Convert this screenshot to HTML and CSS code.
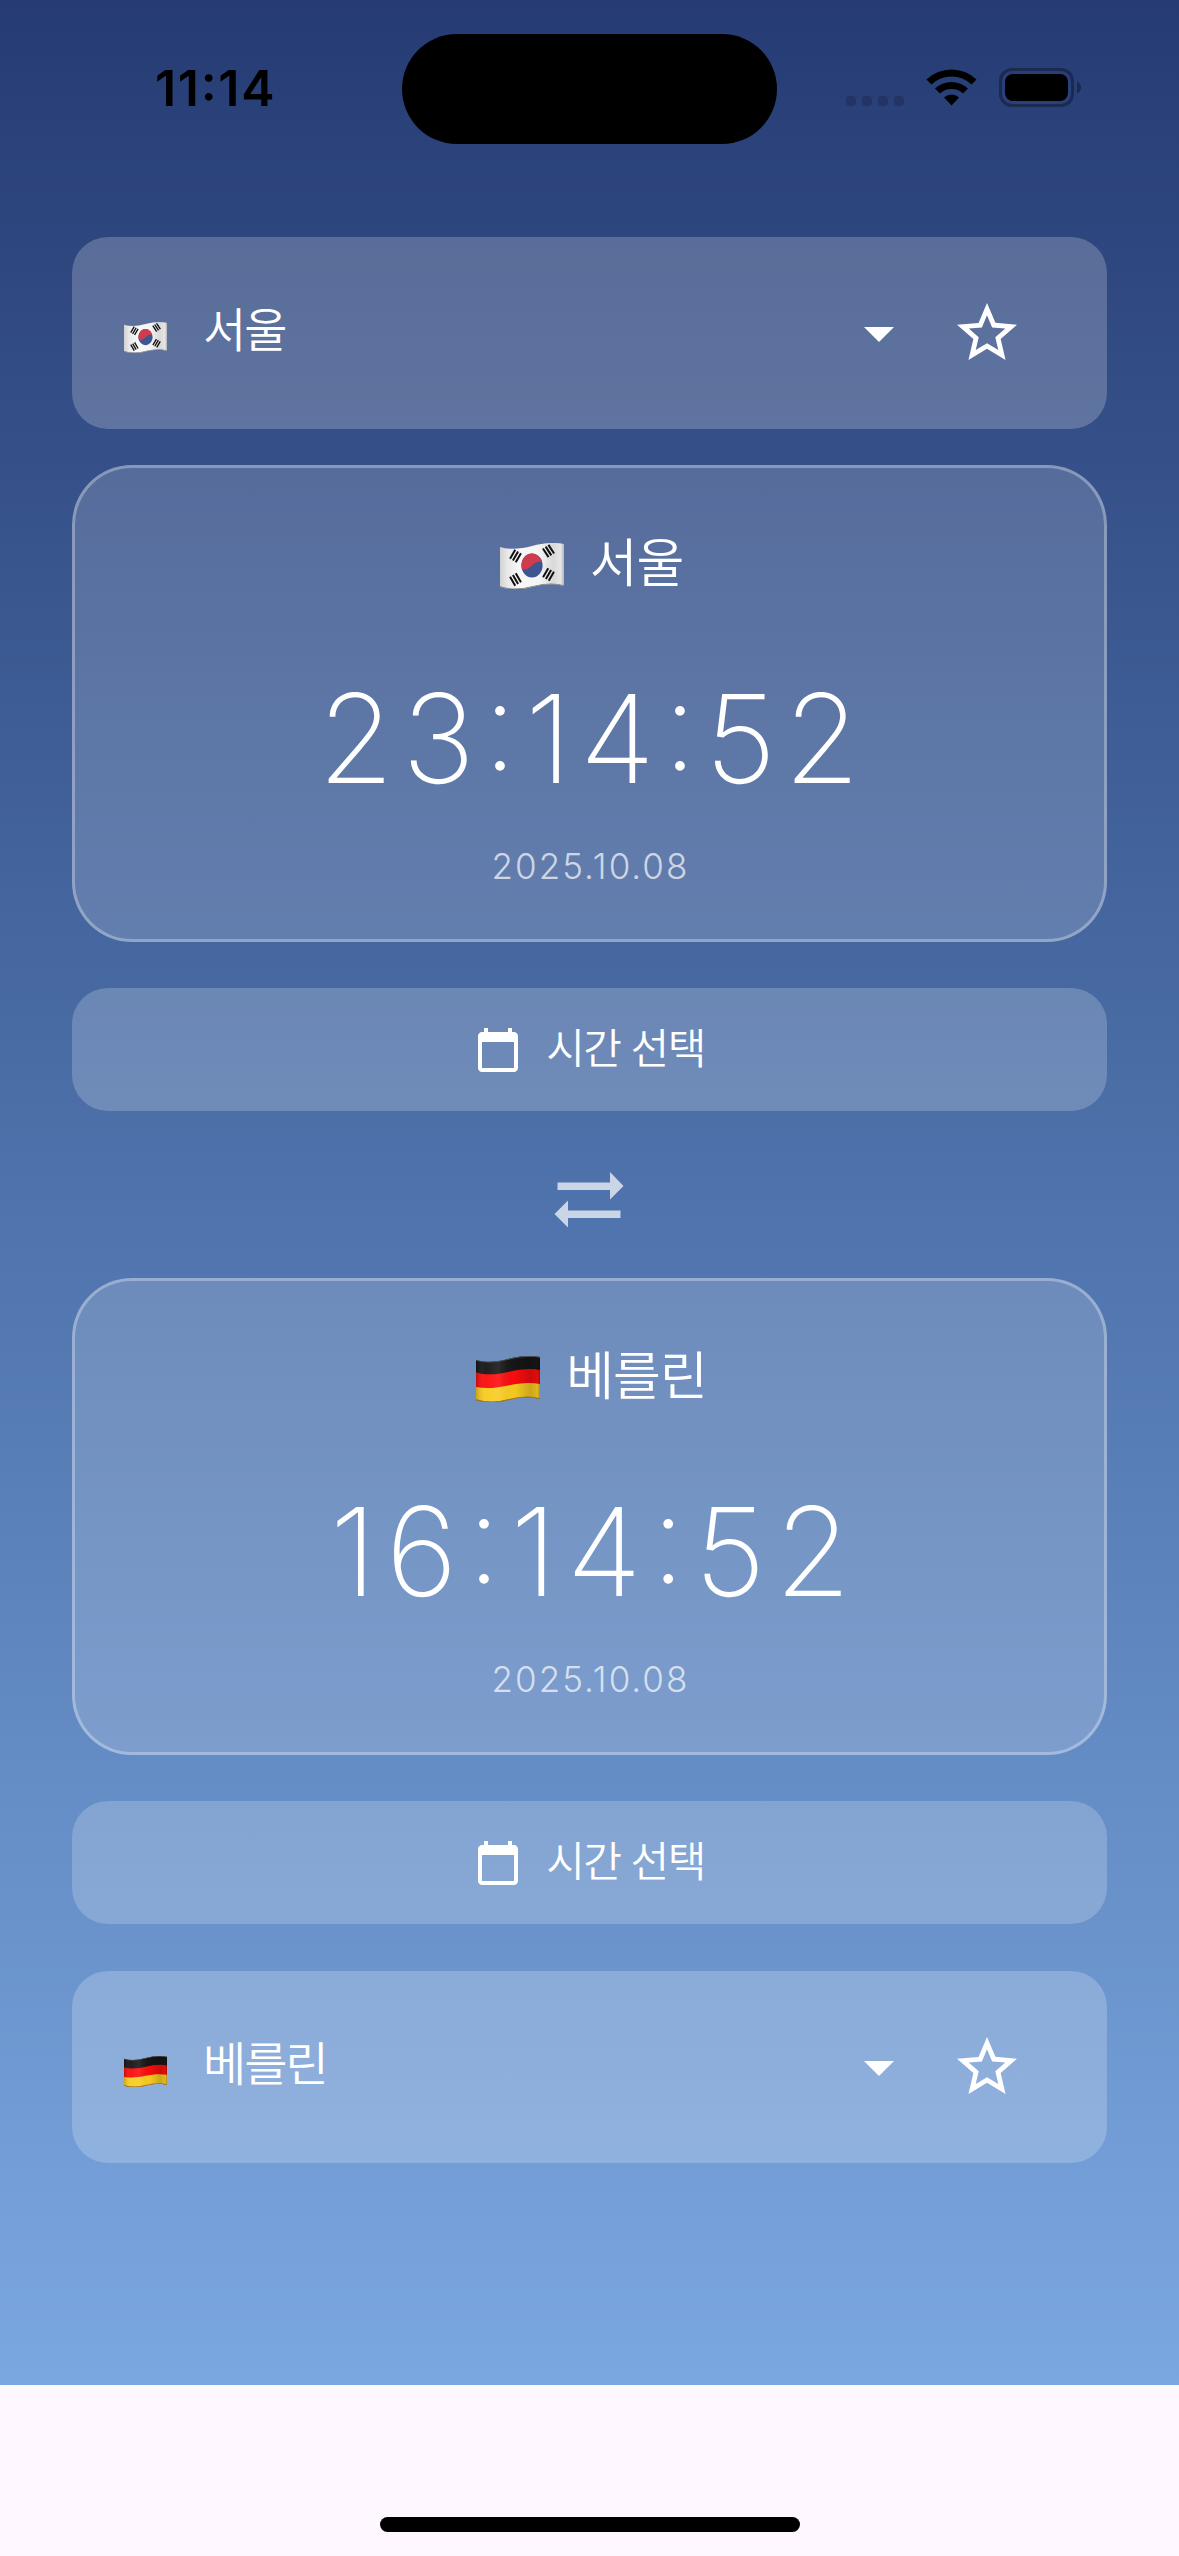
FILE: index.html
```html
<!DOCTYPE html>
<html lang="ko">
<head>
<meta charset="utf-8">
<title>세계 시간</title>
<link rel="stylesheet" href="styles.css">
</head>
<body>
<svg width="0" height="0" class="defs" aria-hidden="true">
  <defs>
    <linearGradient id="paper" x1="0" x2="1" y1="0" y2="0">
      <stop offset="0" stop-color="#d2d2d2"/><stop offset=".12" stop-color="#e9e9e9"/><stop offset=".3" stop-color="#f8f8f8"/><stop offset=".62" stop-color="#f4f4f5"/><stop offset=".83" stop-color="#d9d9da"/><stop offset=".95" stop-color="#e6e6e6"/><stop offset="1" stop-color="#b5b5b5"/>
    </linearGradient>
    <linearGradient id="fold" x1="0" x2="1" y1="0" y2="0">
      <stop offset="0" stop-color="#000" stop-opacity=".2"/><stop offset=".15" stop-color="#fff" stop-opacity=".04"/><stop offset=".35" stop-color="#fff" stop-opacity=".1"/><stop offset=".6" stop-color="#000" stop-opacity=".02"/><stop offset=".85" stop-color="#000" stop-opacity=".18"/><stop offset=".96" stop-color="#000" stop-opacity=".1"/><stop offset="1" stop-color="#000" stop-opacity=".3"/>
    </linearGradient>
    <clipPath id="wave"><path d="M0 4C10 7 21 6 32 3S54 -1 64 1V43C54 40 43 41 32 44S10 47 0 44Z"/></clipPath>
    <g id="bars" stroke="#111" stroke-width="2"><path d="M-3.300 -5.200V5.200M0 -5.200V5.200M3.300 -5.200V5.200"/></g>
    <symbol id="flag-kr" viewBox="0 0 64 46">
      <g clip-path="url(#wave)">
        <rect width="64" height="46" fill="url(#paper)"/>
        <g transform="translate(32 22.500)">
          <ellipse rx="10.600" ry="12" fill="#3d5591"/>
          <path d="M-10.300 3A10.600 12 0 1 1 10.300 -3C8 -4.500 3.500 -4 0 0S-8 5 -10.300 3Z" fill="#cf3c4e"/>
        </g>
        <use href="#bars" transform="translate(15.500 13) rotate(30)"/>
        <use href="#bars" transform="translate(48.500 8) rotate(-33)"/>
        <use href="#bars" transform="translate(15.500 36.500) rotate(-30)"/>
        <use href="#bars" transform="translate(48.500 31.500) rotate(30)"/>
        <path d="M0 44C10 47 21 47 32 44S54 40 64 43" fill="none" stroke="#777" stroke-width="1.600"/>
      </g>
    </symbol>
    <symbol id="flag-de" viewBox="0 0 64 46">
      <g clip-path="url(#wave)">
        <rect width="64" height="46" fill="#161616"/>
        <path d="M0 16.500C10 19.500 21 18.500 32 16S54 12 64 14V46H0Z" fill="#fb0d0d"/>
        <path d="M0 31C10 33 21 32 32 29.500S54 26 64 28V46H0Z" fill="#f8cc20"/>
        <rect width="64" height="46" fill="url(#fold)"/>
        <path d="M0 4C10 7 21 6 32 3S54 -1 64 1" fill="none" stroke="#555" stroke-width="1.600"/>
        <path d="M0 44C10 47 21 47 32 44S54 40 64 43" fill="none" stroke="#8b6d20" stroke-width="1.600"/>
      </g>
    </symbol>
    <symbol id="star" viewBox="0 0 24 24"><path fill="#fff" d="M22 9.240l-7.190-.620L12 2 9.190 8.630 2 9.240l5.460 4.730L5.820 21 12 17.270 18.180 21l-1.630-7.030L22 9.240zM12 15.400l-3.760 2.270 1-4.280-3.320-2.880 4.380-.380L12 6.100l1.710 4.040 4.380.380-3.320 2.880 1 4.280L12 15.400z"/></symbol>
    <symbol id="calendar" viewBox="0 0 24 24"><path fill="#fff" d="M20 3h-1V1h-2v2H7V1H5v2H4c-1.100 0-2 .900-2 2v16c0 1.100.900 2 2 2h16c1.100 0 2-.900 2-2V5c0-1.100-.900-2-2-2zm0 18H4V8h16v13z"/></symbol>
  </defs>
</svg>

<div class="screen">
  <header class="status">
    <div class="status-time">11:14</div>
    <div class="island"></div>
    <div class="status-icons">
      <svg class="dots" viewBox="0 0 58 10"><rect width="10" height="10" rx="3.500"/><rect x="16" width="10" height="10" rx="3.500"/><rect x="32" width="10" height="10" rx="3.500"/><rect x="48" width="10" height="10" rx="3.500"/></svg>
      <svg class="wifi" viewBox="0 0 51 38"><path d="M0.500 11.500A36 36 0 0 1 50.500 11.500L45.500 16.500A29 29 0 0 0 5.500 16.500Z"/><path d="M9 20.500A24 24 0 0 1 42 20.500L37 25.500A17 17 0 0 0 14 25.500Z"/><path d="M18 29.500A11 11 0 0 1 33 29.500L25.500 37.500Z"/></svg>
      <svg class="battery" viewBox="0 0 82 39"><rect x="1.500" y="1.500" width="72" height="36" rx="11.500" fill="none" stroke="#1c2950" stroke-width="3"/><rect x="6" y="6" width="63" height="27" rx="8"/><path d="M78 13.500Q82 15.500 82 19.500T78 25.500Z" fill="#1c2950"/></svg>
    </div>
  </header>

  <main class="content">
    <section class="picker">
      <svg class="flag-small"><use href="#flag-kr"/></svg>
      <span class="picker-name">서울</span>
      <svg class="caret" viewBox="0 0 30 15"><path d="M0 0H30L15 15Z"/></svg>
      <svg class="star"><use href="#star"/></svg>
    </section>

    <section class="clock">
      <div class="city"><svg class="flag-large"><use href="#flag-kr"/></svg><span>서울</span></div>
      <div class="time">23:14:52</div>
      <div class="date">2025.10.08</div>
    </section>

    <button class="select"><svg class="calendar"><use href="#calendar"/></svg><span>시간 선택</span></button>

    <svg class="swap" viewBox="0 0 70 56"><path d="M3.500 10.500H56V0L69.500 14L56 27.500V18H3.500ZM66.500 38.500H14V28.500L0.500 42L14 55.500V46H66.500Z"/></svg>

    <section class="clock">
      <div class="city"><svg class="flag-large"><use href="#flag-de"/></svg><span>베를린</span></div>
      <div class="time time-wide">16:14:52</div>
      <div class="date">2025.10.08</div>
    </section>

    <button class="select"><svg class="calendar"><use href="#calendar"/></svg><span>시간 선택</span></button>

    <section class="picker">
      <svg class="flag-small"><use href="#flag-de"/></svg>
      <span class="picker-name">베를린</span>
      <svg class="caret" viewBox="0 0 30 15"><path d="M0 0H30L15 15Z"/></svg>
      <svg class="star"><use href="#star"/></svg>
    </section>
  </main>
</div>
<footer class="bottom"><div class="home"></div></footer>
</body>
</html>
```

FILE: styles.css
```css
* { box-sizing: border-box; }
html, body { margin: 0; }
body {
  width: 1179px;
  height: 2556px;
  overflow: hidden;
  background: #fef7ff;
  font-family: Inter, "Noto Sans CJK KR", sans-serif;
  color: #fff;
}
svg { display: block; flex: none; }
.defs { position: absolute; }
.screen {
  height: 2385px;
  background: linear-gradient(180deg, #263b73 0%, #4a6da6 45%, #7ba7e0 100%);
}
.status {
  height: 237px;
  display: flex;
  align-items: flex-start;
  color: #000;
}
.status-time {
  width: 402px;
  padding: 58px 0 0 155px;
  font-size: 50px;
  line-height: 60px;
  font-weight: 600;
  letter-spacing: 1.700px;
  font-feature-settings: "case";
}
.island { width: 375px; height: 110px; margin-top: 34px; border-radius: 55px; background: #000; }
.status-icons { display: flex; align-items: flex-start; padding: 68px 0 0 69px; }
.dots { width: 58px; height: 10px; margin-top: 28px; fill: #233565; }
.wifi { width: 51px; height: 38px; margin: 0 22px; }
.battery { width: 82px; height: 39px; }
.content { padding: 0 72px; display: flex; flex-direction: column; }
.picker {
  height: 192px;
  padding: 0 84px 0 52px;
  display: flex;
  align-items: center;
  border-radius: 36px;
  background: rgba(255, 255, 255, .21);
}
.flag-small { width: 43px; height: 31px; margin-top: 8px; }
.picker-name { flex: 1; margin: -6px 0 0 36px; font-size: 47px; line-height: 60px; font-weight: 350; letter-spacing: -2px; }
.caret { width: 30px; height: 15px; margin-top: 3px; fill: #fff; }
.star { width: 72px; height: 72px; margin-left: 57px; }
.clock {
  height: 477px;
  padding-top: 60px;
  border: 3px solid rgba(255, 255, 255, .3);
  border-radius: 60px;
  background: rgba(255, 255, 255, .16);
  display: flex;
  flex-direction: column;
  align-items: center;
}
.picker + .clock { margin-top: 36px; }
.city { height: 72px; padding-left: 4px; display: flex; align-items: center; gap: 26px; font-size: 52px; line-height: 72px; font-weight: 350; letter-spacing: -1px; }
.flag-large { width: 64px; height: 46px; margin-top: 4px; }
.time {
  margin-top: 63px;
  font-size: 123px;
  line-height: 152px;
  font-weight: 170;
  letter-spacing: 8px;
  text-indent: 7px;
  font-feature-settings: "case";
}
.time-wide { letter-spacing: 9.400px; text-indent: 11px; }
.date { margin-top: 24px; font-size: 35px; line-height: 54px; font-weight: 350; letter-spacing: 2px; text-indent: 2px; color: rgba(255, 255, 255, .7); }
.select {
  height: 123px;
  margin: 46px 0 0;
  padding: 0;
  border: 0;
  border-radius: 36px;
  background: rgba(255, 255, 255, .2);
  color: #fff;
  font: 350 42px/60px Inter, "Noto Sans CJK KR", sans-serif;
  letter-spacing: -1.600px;
  display: flex;
  align-items: center;
  justify-content: center;
  gap: 24px;
}
.select span { margin-top: -2px; }
.calendar { width: 48px; height: 48px; }
.swap { width: 70px; height: 56px; margin: 61px 0 50px 482px; fill: rgba(255, 255, 255, .7); }
.select + .picker { margin-top: 47px; }
.bottom { height: 171px; display: flex; justify-content: center; align-items: flex-end; padding-bottom: 24px; }
.home { width: 420px; height: 15px; border-radius: 8px; background: #000; }
```
